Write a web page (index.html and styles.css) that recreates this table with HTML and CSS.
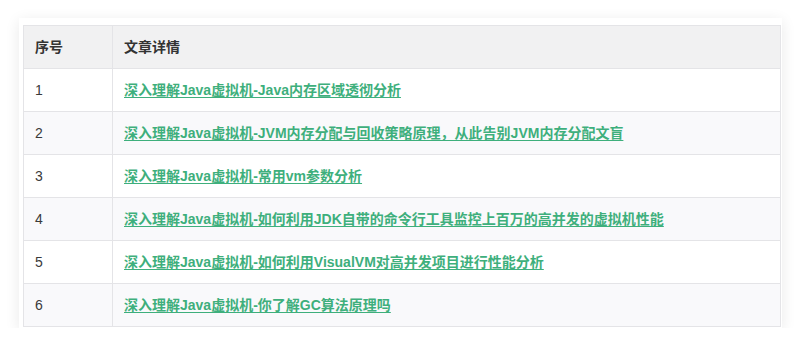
FILE: index.html
```html
<!DOCTYPE html>
<html lang="zh-CN">
<head>
<meta charset="utf-8">
<title>文章详情</title>
<link rel="stylesheet" href="styles.css">
</head>
<body>
<div class="card">
  <table class="articles">
    <thead>
      <tr><th class="col-no">序号</th><th>文章详情</th></tr>
    </thead>
    <tbody>
      <tr><td>1</td><td><a href="#">深入理解Java虚拟机-Java内存区域透彻分析</a></td></tr>
      <tr><td>2</td><td><a href="#">深入理解Java虚拟机-JVM内存分配与回收策略原理，从此告别JVM内存分配文盲</a></td></tr>
      <tr><td>3</td><td><a href="#">深入理解Java虚拟机-常用vm参数分析</a></td></tr>
      <tr><td>4</td><td><a href="#">深入理解Java虚拟机-如何利用JDK自带的命令行工具监控上百万的高并发的虚拟机性能</a></td></tr>
      <tr><td>5</td><td><a href="#">深入理解Java虚拟机-如何利用VisualVM对高并发项目进行性能分析</a></td></tr>
      <tr><td>6</td><td><a href="#">深入理解Java虚拟机-你了解GC算法原理吗</a></td></tr>
    </tbody>
  </table>
</div>
</body>
</html>
```
FILE: styles.css
```css
html, body {
  margin: 0;
  padding: 0;
  background: #ffffff;
}
body {
  padding: 18px 0 0 19px;
  font-family: "Liberation Sans", "Noto Sans CJK SC", sans-serif;
  font-size: 14px;
  color: #333;
}
.card {
  width: 758px;
  padding: 7px 1px 1px 4px;
  background: #fff;
  box-shadow: 0 3px 14px rgba(0, 0, 0, 0.09);
}
.articles {
  width: 100%;
  border-collapse: collapse;
}
.articles th,
.articles td {
  height: 42px;
  padding: 0 11px;
  border: 1px solid #e4e4e7;
  text-align: left;
  vertical-align: middle;
  line-height: 20px;
}
.articles th {
  background: #f1f1f2;
  font-weight: bold;
  color: #333;
}
.articles .col-no {
  width: 66px;
}
.articles td {
  color: #3a3a3a;
}
.articles tbody tr:nth-child(even) td {
  background: #f9f9fb;
}
.articles a {
  color: #3eaf7c;
  font-weight: 600;
  text-decoration: underline;
  text-underline-offset: 2px;
}
```
